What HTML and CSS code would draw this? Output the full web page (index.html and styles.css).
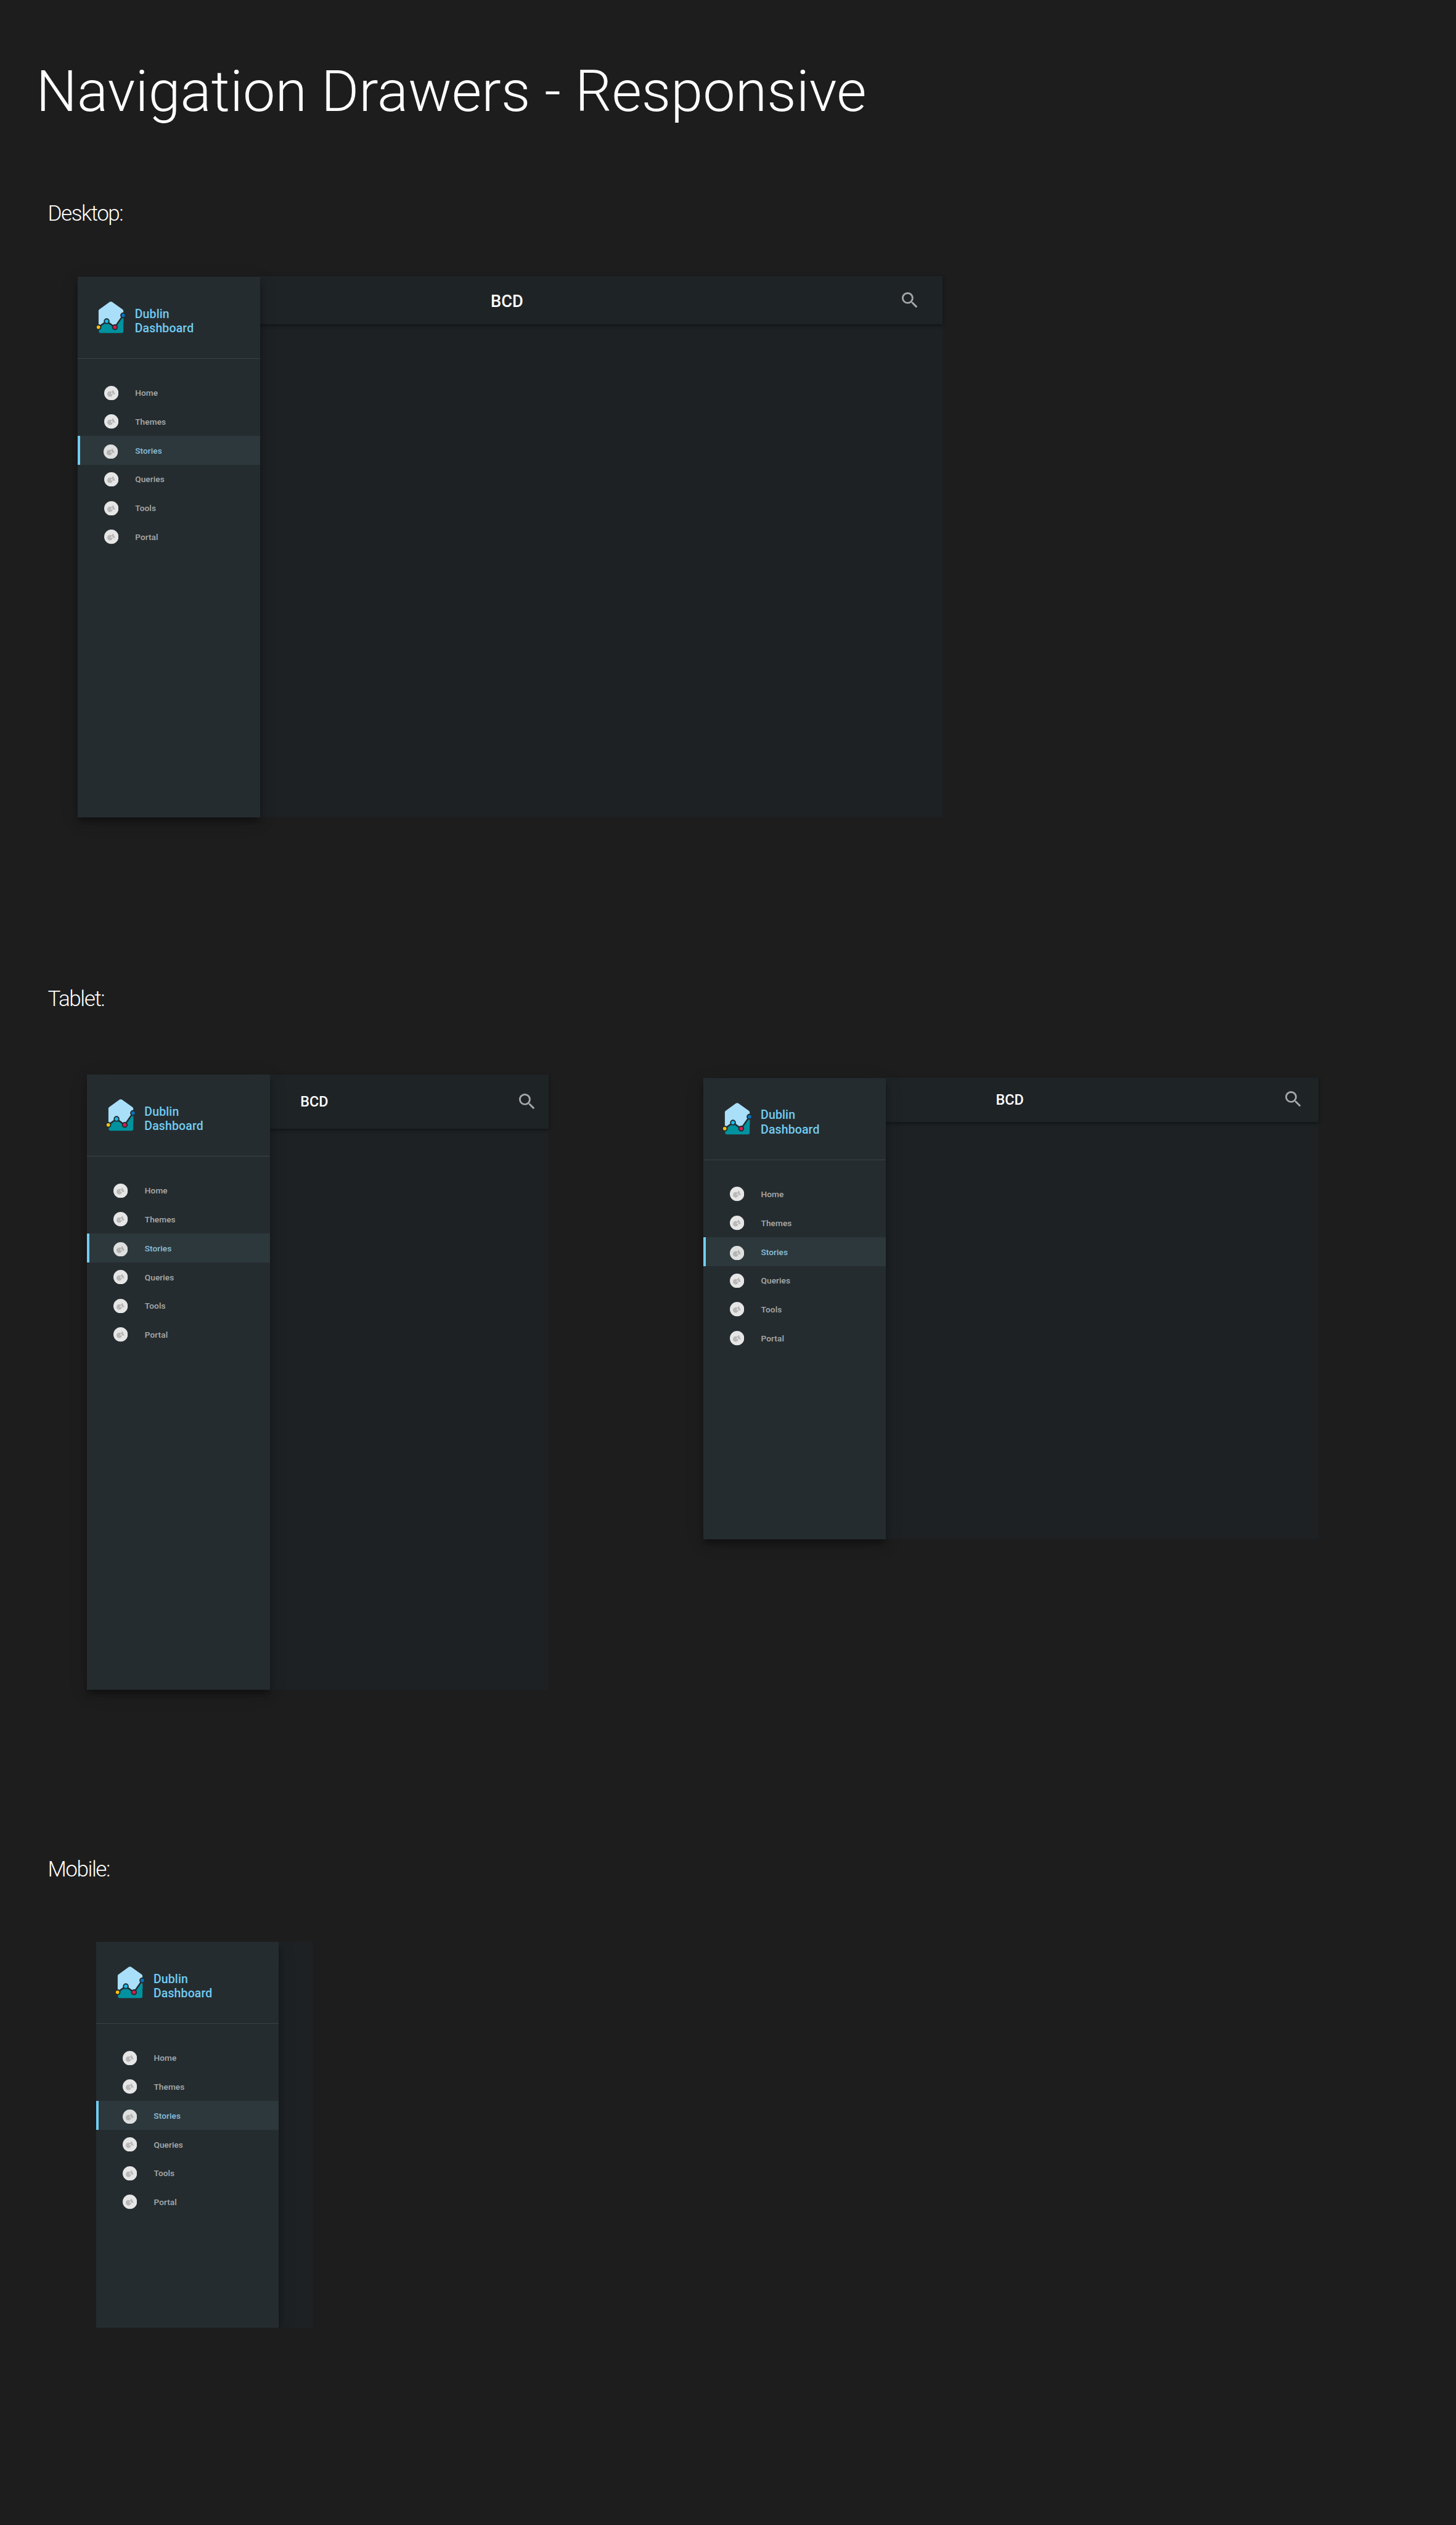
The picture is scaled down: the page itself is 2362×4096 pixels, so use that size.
FILE: index.html
```html
<!DOCTYPE html>
<html lang="en">
<head>
<meta charset="utf-8">
<title>Navigation Drawers - Responsive</title>
<link rel="stylesheet" href="styles.css">
</head>
<body>
<svg class="sprite" aria-hidden="true">
  <symbol id="logo" viewBox="0 0 50 54">
    <path d="M4 15.600q0-1.400 1.200-2.300L22.500.8q2-1.200 4 0l17.600 12.500q1.200.9 1.200 2.300V37L30 44 4 40z" fill="#aadffa"/>
    <path d="M4.500 44.500 17.500 33.500 31 43.500 45.300 25V50q0 2.500-2.500 2.500H7q-2.500 0-2.500-2.500z" fill="#00929f"/>
    <path d="M3.700 43 17.500 33 31 43 45 23.200" fill="none" stroke="#242c2f" stroke-width="2.600"/>
    <g stroke="#242c2f" stroke-width="2">
      <circle cx="3.800" cy="42.900" r="3.900" fill="#ffc20e"/>
      <circle cx="17.500" cy="32.900" r="3.900" fill="#19bdf0"/>
      <circle cx="31.200" cy="42.900" r="3.900" fill="#da1c52"/>
      <circle cx="45" cy="23.200" r="3.900" fill="#0873be"/>
    </g>
  </symbol>
  <symbol id="dot" viewBox="0 0 24 24">
    <circle cx="12" cy="12" r="12" fill="#e6e6e6"/>
    <circle cx="9.600" cy="13.600" r="4.500" fill="#b9b9b9"/>
    <path d="M14.600 6.300 18.500 13.900H13.500L12 10z" fill="#b9b9b9"/>
    <path d="M13.100 10.200 14.500 13.900 10.700 13.400z" fill="#e6e6e6"/>
  </symbol>
  <symbol id="search" viewBox="3 3 17.490 17.490">
    <path d="M15.500 14h-.79l-.28-.27A6.471 6.471 0 0 0 16 9.500 6.500 6.500 0 1 0 9.500 16c1.610 0 3.090-.59 4.230-1.570l.27.280v.79l5 4.990L20.490 19l-4.990-5zm-6 0C7.010 14 5 11.990 5 9.500S7.010 5 9.500 5 14 7.010 14 9.500 11.990 14 9.500 14z" fill="#a5a7a8"/>
  </symbol>
</svg>
<main class="page">
  <h1 class="title">Navigation Drawers - Responsive</h1>

  <section class="group group--desktop">
    <h2 class="label">Desktop:</h2>
    <div class="screens">
      <div class="screen screen--desktop">
        <nav class="drawer">
          <div class="brand"><svg class="logo"><use href="#logo"/></svg><span>Dublin<br>Dashboard</span></div>
          <ul class="menu">
            <li><svg><use href="#dot"/></svg>Home</li>
            <li><svg><use href="#dot"/></svg>Themes</li>
            <li class="active"><svg><use href="#dot"/></svg>Stories</li>
            <li><svg><use href="#dot"/></svg>Queries</li>
            <li><svg><use href="#dot"/></svg>Tools</li>
            <li><svg><use href="#dot"/></svg>Portal</li>
          </ul>
        </nav>
        <header class="bar"><span class="bar-title">BCD</span><svg class="search"><use href="#search"/></svg></header>
      </div>
    </div>
  </section>

  <section class="group group--tablet">
    <h2 class="label">Tablet:</h2>
    <div class="screens">
      <div class="screen screen--portrait">
        <nav class="drawer">
          <div class="brand"><svg class="logo"><use href="#logo"/></svg><span>Dublin<br>Dashboard</span></div>
          <ul class="menu">
            <li><svg><use href="#dot"/></svg>Home</li>
            <li><svg><use href="#dot"/></svg>Themes</li>
            <li class="active"><svg><use href="#dot"/></svg>Stories</li>
            <li><svg><use href="#dot"/></svg>Queries</li>
            <li><svg><use href="#dot"/></svg>Tools</li>
            <li><svg><use href="#dot"/></svg>Portal</li>
          </ul>
        </nav>
        <header class="bar"><span class="bar-title">BCD</span><svg class="search"><use href="#search"/></svg></header>
      </div>
      <div class="screen screen--landscape">
        <nav class="drawer">
          <div class="brand"><svg class="logo"><use href="#logo"/></svg><span>Dublin<br>Dashboard</span></div>
          <ul class="menu">
            <li><svg><use href="#dot"/></svg>Home</li>
            <li><svg><use href="#dot"/></svg>Themes</li>
            <li class="active"><svg><use href="#dot"/></svg>Stories</li>
            <li><svg><use href="#dot"/></svg>Queries</li>
            <li><svg><use href="#dot"/></svg>Tools</li>
            <li><svg><use href="#dot"/></svg>Portal</li>
          </ul>
        </nav>
        <header class="bar"><span class="bar-title">BCD</span><svg class="search"><use href="#search"/></svg></header>
      </div>
    </div>
  </section>

  <section class="group group--mobile">
    <h2 class="label">Mobile:</h2>
    <div class="screens">
      <div class="screen screen--mobile">
        <nav class="drawer">
          <div class="brand"><svg class="logo"><use href="#logo"/></svg><span>Dublin<br>Dashboard</span></div>
          <ul class="menu">
            <li><svg><use href="#dot"/></svg>Home</li>
            <li><svg><use href="#dot"/></svg>Themes</li>
            <li class="active"><svg><use href="#dot"/></svg>Stories</li>
            <li><svg><use href="#dot"/></svg>Queries</li>
            <li><svg><use href="#dot"/></svg>Tools</li>
            <li><svg><use href="#dot"/></svg>Portal</li>
          </ul>
        </nav>
      </div>
    </div>
  </section>
</main>
</body>
</html>
```
FILE: styles.css
```css
* { box-sizing: border-box; }
html { background: #1d1d1d; }
body {
  margin: 0;
  background: #1d1d1d;
  color: #fff;
  font-family: Roboto, "Liberation Sans", sans-serif;
  overflow: hidden;
}
.sprite { display: none; }

.page {
  width: 2424px;
  height: 4204px;
  padding-top: 96px;
  display: flex;
  flex-direction: column;
  zoom: 0.97442;
}
.title {
  margin: 0 0 0 60px;
  height: 112px;
  font-size: 96px;
  line-height: 112px;
  font-weight: 300;
  letter-spacing: .07px;
  white-space: nowrap;
}

.group { display: flex; flex-direction: column; }
.group--desktop { margin-top: 128px; height: 1307px; }
.group--tablet { height: 1449px; }
.label {
  margin: 0 0 0 79.500px;
  height: 40px;
  font-size: 36px;
  line-height: 40px;
  font-weight: 300;
  letter-spacing: -1.500px;
}
.screens { display: flex; align-items: flex-start; }
.group--desktop .screens { padding: 84px 0 0 129px; }
.group--tablet .screens { padding: 106px 0 0 145px; gap: 258px; }
.group--mobile .screens { padding: 101px 0 0 160px; }

.screen {
  display: flex;
  align-items: flex-start;
  background: #1d2124;
}
.screen--desktop { width: 1440px; height: 900px; }
.screen--portrait { width: 768px; height: 1024px; }
.screen--landscape { width: 1024px; height: 768px; margin-top: 5px; }
.screen--mobile { width: 360px; height: 642px; overflow: hidden; }

.drawer {
  position: relative;
  z-index: 1;
  flex: none;
  width: 304px;
  height: 100%;
  background: #252c2f;
  box-shadow: 0 8px 10px rgba(0, 0, 0, .2), 0 6px 30px rgba(0, 0, 0, .12), 0 8px 10px -5px rgba(0, 0, 0, .2);
}
.screen--desktop .drawer, .screen--landscape .drawer { margin-top: 1px; }
.brand {
  display: flex;
  height: 136px;
  padding: 41px 0 0 31.500px;
  border-bottom: 1.100px solid #3a4245;
  color: #72cdf4;
  font-size: 20px;
  line-height: 24px;
  font-weight: 500;
  letter-spacing: .15px;
}
.brand span { margin: 8.700px 0 0 14px; }
.logo { width: 50px; height: 54px; }
.menu { margin: 0; padding: 33px 0 0; list-style: none; }
.menu li {
  display: flex;
  align-items: center;
  height: 48px;
  padding-left: 44px;
  gap: 28px;
  color: #a8abac;
  font-size: 14px;
  font-weight: 500;
  letter-spacing: .1px;
}
.menu svg { width: 24px; height: 24px; }
.menu .active {
  padding-left: 39.800px;
  border-left: 4.200px solid #72cdf4;
  background: #2d383c;
  color: #8abfdb;
}
.active svg { margin-top: 4px; opacity: .96; }

.bar {
  flex: 1;
  display: flex;
  justify-content: space-between;
  background: #1e2326;
  box-shadow: 0 3px 4px rgba(0, 0, 0, .26), 0 1px 8px rgba(0, 0, 0, .1);
}
.bar-title { font-weight: 500; }
.search { width: 26px; height: 26px; }
.screen--desktop .bar { height: 80px; padding: 26px 41.500px 0 384px; }
.screen--portrait .bar { height: 90px; padding: 32px 23px 0 51px; }
.screen--landscape .bar { height: 74px; padding: 23px 29px 0 183px; }
.screen--desktop .bar-title { font-size: 28px; line-height: 31px; }
.screen--portrait .bar-title { font-size: 24px; line-height: 28px; }
.screen--landscape .bar-title { font-size: 24px; line-height: 30px; }
```
